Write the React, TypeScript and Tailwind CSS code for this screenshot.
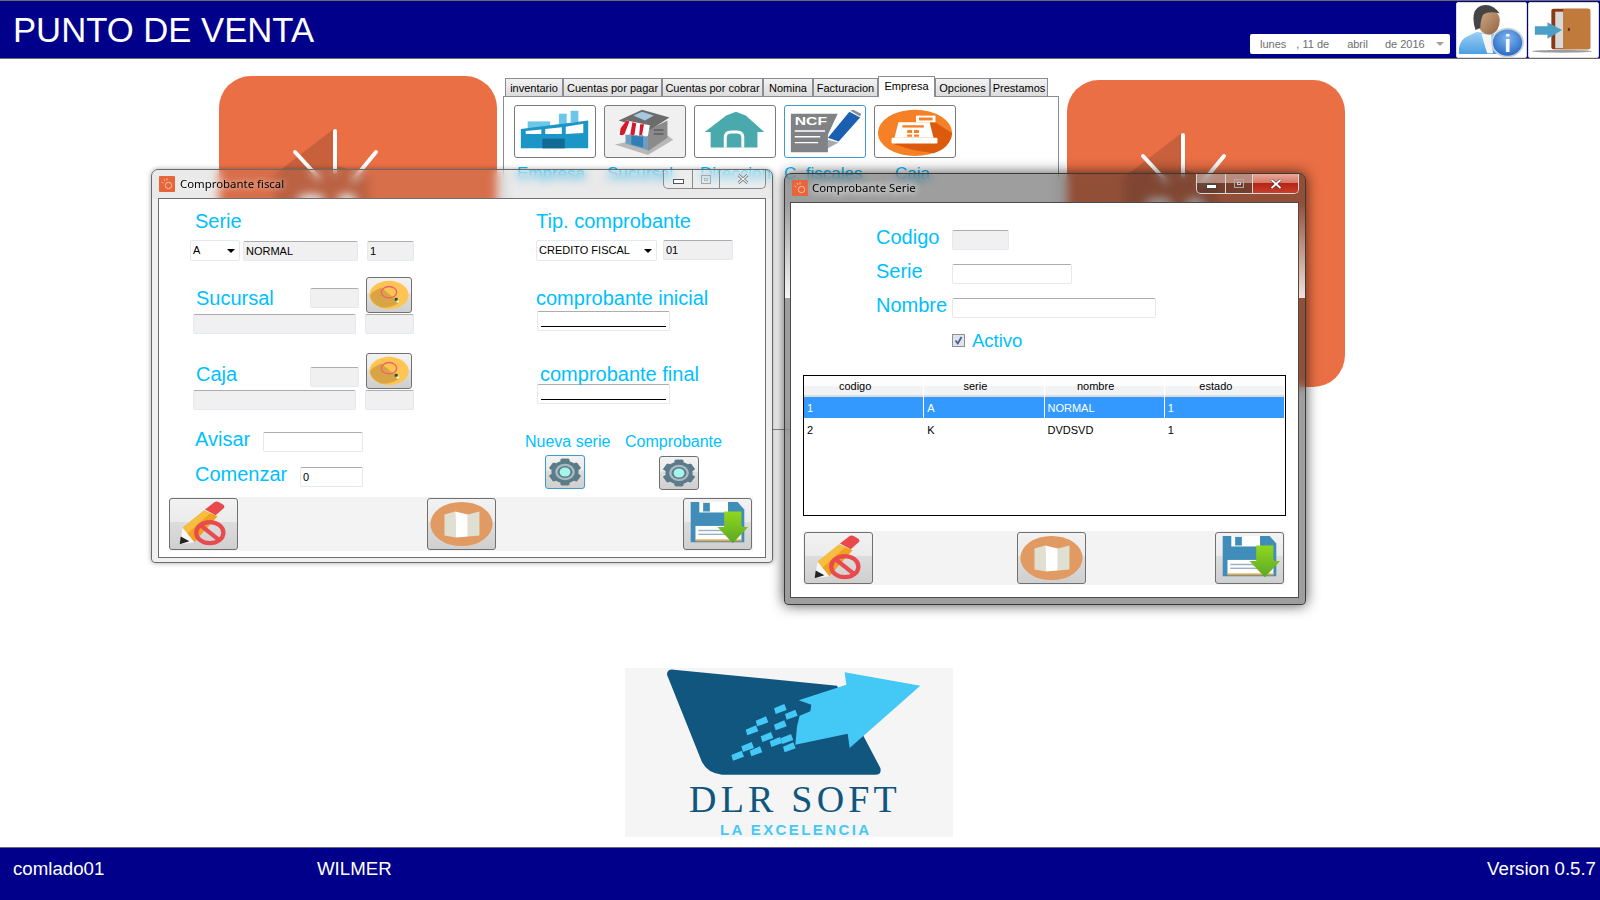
import React from "react";

const inputBase = "border border-[#e3e9ef] border-t-[#abadb3] rounded-[2px] h-[20px] px-[2px] text-[11px] leading-[18px] text-black shrink-0";

function Field({ w, value, ro, className = "" }: { w: string; value?: string; ro?: boolean; className?: string }) {
  return <div className={`${inputBase} ${w} ${ro ? "bg-[#f0f0f0]" : "bg-white"} ${className}`}>{value}</div>;
}

function Combo({ w, value }: { w: string; value: string }) {
  return (
    <div className={`${w} h-[21px] border border-[#e3e9ef] rounded-[2px] bg-white flex items-center justify-between pl-[2px] pr-[4px] text-[11px] text-black shrink-0`}>
      <span>{value}</span>
      <span className="w-0 h-0 border-x-[4px] border-x-transparent border-t-[4px] border-t-black" />
    </div>
  );
}

function Masked() {
  return (
    <div className="w-[133px] h-[20px] bg-white border border-[#e3e9ef] border-t-[#abadb3] rounded-[2px] px-[2px] pt-[14px]">
      <div className="h-px bg-black mx-px" />
    </div>
  );
}

function Label({ children, className = "" }: { children: React.ReactNode; className?: string }) {
  return <div className={`text-[20px] leading-[23px] text-[#00bfff] whitespace-nowrap ${className}`}>{children}</div>;
}

function AeroBtn({ w, h, children, focus }: { w: string; h: string; children: React.ReactNode; focus?: boolean }) {
  return (
    <div className={`${w} ${h} shrink-0 rounded-[3px] border ${focus ? "border-[#3c9ad0]" : "border-[#707070]"} bg-[linear-gradient(#f2f2f2_0%,#ebebeb_45%,#dddddd_46%,#cfcfcf_100%)] overflow-hidden`}>
      {children}
    </div>
  );
}

function Hat() {
  return (
    <svg viewBox="0 0 46 36" preserveAspectRatio="none" className="w-full h-full">
      <ellipse cx="23" cy="18" rx="20.5" ry="15" fill="#ffc452" />
      <path d="M3 19 Q5 14 15 10 L34 26 Q24 33 14 31 Q5 27 3 19Z" fill="#d9a544" />
      <ellipse cx="23" cy="15" rx="8" ry="6" fill="none" stroke="#ee5f74" strokeWidth="1.4" />
      <rect x="29" y="21" width="3" height="3" fill="#0f5a23" />
      <rect x="31" y="24" width="2.5" height="2" fill="#fff" />
    </svg>
  );
}

function Gear() {
  return (
    <svg viewBox="0 0 40 34" preserveAspectRatio="none" className="w-full h-full">
      <g transform="translate(20 17) scale(1.3 1.08) translate(-20 -17)">
        {[0, 60, 120, 180, 240, 300].map((a) => (
          <rect key={a} x="16.5" y="4" width="7" height="26" rx="1" fill="#5b7b89" transform={`rotate(${a} 20 17)`} />
        ))}
        <circle cx="20" cy="17" r="11" fill="#5b7b89" />
        <circle cx="20" cy="17" r="8" fill="#a9b9c0" />
        <circle cx="20" cy="17" r="6" fill="#5b7b89" />
        <circle cx="20" cy="17" r="4.4" fill="#a6f5ea" />
      </g>
    </svg>
  );
}

function PencilNo() {
  return (
    <svg viewBox="0 0 69 52" preserveAspectRatio="none" className="w-full h-full">
      <path d="M13 30 L35 12 L49 18 L25 45Z" fill="#f0a21e" />
      <path d="M13 30 L35 12 L41 15 L18 36Z" fill="#f7bd3f" />
      <path d="M36 11 L46 3 Q48 2 50 3 L55 6 Q57 8 55 10 L47 17Z" fill="#e9494c" />
      <path d="M13 30 L25 45 L10 47Z" fill="#f7f7f7" />
      <path d="M11 39 L20 44 L10 47Z" fill="#222" />
      <ellipse cx="41" cy="35" rx="14" ry="11" fill="none" stroke="#e94a4d" strokeWidth="4.4" />
      <path d="M31 27 L51 43" stroke="#e94a4d" strokeWidth="4.4" />
    </svg>
  );
}

function MapIcon() {
  return (
    <svg viewBox="0 0 69 52" preserveAspectRatio="none" className="w-full h-full">
      <ellipse cx="34.5" cy="26" rx="32" ry="23" fill="#e09a62" />
      <path d="M17 16 L28 13 L29 40 L17 38Z" fill="#dfe0d2" />
      <path d="M28 13 L41 16 L41 39 L29 40Z" fill="#fff" />
      <path d="M41 16 L53 13 L53 38 L41 39Z" fill="#dfe0d2" />
    </svg>
  );
}

function Floppy() {
  return (
    <svg viewBox="0 0 70 52" preserveAspectRatio="none" className="w-full h-full">
      <defs>
        <linearGradient id="arrowGreen" x1="0" y1="0" x2="0" y2="1">
          <stop offset="0" stopColor="#90d81c" />
          <stop offset="1" stopColor="#5ba727" />
        </linearGradient>
      </defs>
      <path d="M7 3 H56 L63 11 V45 H7Z" fill="#3f8db8" />
      <rect x="16" y="3" width="30" height="11" fill="#fff" />
      <rect x="20" y="4" width="7" height="9" fill="#3f8db8" />
      <rect x="12" y="28" width="48" height="15" fill="#fff" />
      <rect x="15" y="32" width="30" height="1.5" fill="#9ab0c4" />
      <rect x="15" y="36" width="32" height="1.5" fill="#9ab0c4" />
      <rect x="12" y="42" width="48" height="2" fill="#e8a84a" />
      <path d="M42 13 H60 V29 H67 L51 46 L35 29 H42Z" fill="url(#arrowGreen)" />
    </svg>
  );
}

function Factory() {
  return (
    <svg viewBox="0 0 82 53" preserveAspectRatio="none" className="w-full h-full">
      <rect x="13" y="16" width="23" height="7" fill="#6cc6e8" />
      <rect x="45" y="8" width="8" height="11" fill="#6cc6e8" />
      <rect x="57" y="5" width="8" height="12" fill="#6cc6e8" />
      <path d="M6 24 L75 15 V44 H6Z" fill="#1b96c7" />
      <path d="M11 26 L27 24.5 V29 H11Z M31 24 L48 22 V29 H31Z M52 21.5 L70 18.5 V28 L52 29Z" fill="#fff" />
      <rect x="28" y="34" width="23" height="10" fill="#116a94" />
    </svg>
  );
}

function Store() {
  return (
    <svg viewBox="0 0 82 53" preserveAspectRatio="none" className="w-full h-full">
      <path d="M10 40 L44 51 L70 35 L62 29 Z" fill="#8a8a8a" opacity="0.55" />
      <path d="M21 26 L44 28 L44 46 L21 39Z" fill="#6f9dbd" />
      <path d="M27 31 L39 32 V43 L27 40Z" fill="#2f7fb5" />
      <path d="M44 25 L64 15 V33 L44 47Z" fill="#8b8b8b" />
      <path d="M14 15 L38 4 L66 12 L46 25Z" fill="#6c6c6c" />
      <path d="M29 10 L38 6 L50 10 L41 15Z" fill="#a5c9de" />
      <path d="M12 29 L22 15 L46 20 L44 31 Q41 33 38 30 Q35 32 32 30 Q29 32 26 29 Q23 31 20 29 Q16 33 12 29Z" fill="#fff" />
      <path d="M16 23 L22 15 L25 16 L20 29 Q18 31 15 30Z M28 17 L32 18 L30 31 Q28 31 26 29Z M36 19 L40 19 L38 30 L35 31Z" fill="#d6182a" />
      <rect x="50" y="24" width="10" height="2" fill="#666" />
      <rect x="50" y="28" width="10" height="2" fill="#666" />
    </svg>
  );
}

function House() {
  return (
    <svg viewBox="0 0 82 53" preserveAspectRatio="none" className="w-full h-full">
      <path d="M10 27 L32 10 L42 6 L52 10 L71 27 H64 V43 H16 V27Z" fill="#4aa9ac" />
      <path d="M31 43 V33 Q31 27 37 27 H43 Q49 27 49 33 V43" fill="none" stroke="#fff" strokeWidth="3" />
    </svg>
  );
}

function Ncf() {
  return (
    <svg viewBox="0 0 82 53" preserveAspectRatio="none" className="w-full h-full">
      <path d="M6 8 H54 L44 30 V48 H6Z" fill="#808285" />
      <text x="10" y="20" fontSize="10.5" fontWeight="700" fill="#fff" textLength="33" lengthAdjust="spacingAndGlyphs">NCF</text>
      <path d="M10 26 H41 M10 32 H36 M10 38 H34" stroke="#fff" strokeWidth="1.4" />
      <path d="M66 6 L77 12 L55 37 L44 33Z" fill="#1a5fb0" />
      <path d="M67 5 L70 4 L78 8 L77 11Z" fill="#8d8f92" />
      <path d="M44 35 L55 38 L44 44Z" fill="#a7a9ac" />
    </svg>
  );
}

function Register() {
  return (
    <svg viewBox="0 0 82 53" preserveAspectRatio="none" className="w-full h-full">
      <ellipse cx="41" cy="28" rx="38" ry="24" fill="#f58025" />
      <path d="M57 14 L79 28 Q77 44 60 49 L40 46 L20 40 Z" fill="#dc5a0c" />
      <rect x="42" y="10" width="20" height="7" fill="#fff" />
      <rect x="45" y="12" width="14" height="3" fill="#f58025" />
      <path d="M24 17 H56 L60 33 H20Z" fill="#fff" />
      <rect x="28" y="20" width="22" height="2.4" fill="#f58025" />
      <path d="M33 25 H38 V28 H33Z M40 25 H45 V28 H40Z M33 29.5 H38 V32 H33Z M40 29.5 H45 V32 H40Z" fill="#f58025" />
      <rect x="17" y="33" width="47" height="6" rx="1" fill="#fff" />
    </svg>
  );
}

function UserInfo() {
  return (
    <svg viewBox="0 0 71 56" preserveAspectRatio="none" className="w-full h-full">
      <defs>
        <linearGradient id="skin" x1="0" y1="0" x2="1" y2="1">
          <stop offset="0" stopColor="#d6b08c" />
          <stop offset="1" stopColor="#8f6242" />
        </linearGradient>
        <radialGradient id="infoBlue" cx="0.5" cy="0.35" r="0.7">
          <stop offset="0" stopColor="#7fb6ee" />
          <stop offset="1" stopColor="#1f62c0" />
        </radialGradient>
        <linearGradient id="shirtBlue" x1="0" y1="0" x2="0" y2="1">
          <stop offset="0" stopColor="#9bd0f4" />
          <stop offset="1" stopColor="#4c9fe4" />
        </linearGradient>
      </defs>
      <path d="M2 53 Q1 38 12 34 L20 30 L38 32 L44 53Z" fill="url(#shirtBlue)" />
      <path d="M25 32 L35 32 L37 52 L31 52Z" fill="#f5f5f5" />
      <path d="M21 22 Q18 8 30 7 Q44 7 44 18 Q44 30 34 33 Q25 33 21 22Z" fill="url(#skin)" />
      <path d="M19 28 Q13 8 24 3 Q36 -1 44 11 Q33 8 27 12 Q24 18 24 26Z" fill="#454545" />
      <ellipse cx="52" cy="41" rx="16" ry="14.5" fill="url(#infoBlue)" stroke="#c9d3dc" strokeWidth="1.8" />
      <text x="52" y="51" fontSize="25" fontWeight="700" fill="#fff" textAnchor="middle">i</text>
    </svg>
  );
}

function Door() {
  return (
    <svg viewBox="0 0 71 56" preserveAspectRatio="none" className="w-full h-full">
      <ellipse cx="34" cy="50" rx="31" ry="1.5" fill="#9c9c9c" />
      <rect x="23" y="6" width="40" height="42" rx="2" fill="#8a3a10" />
      <rect x="27" y="9" width="9" height="38" fill="#d8d8d8" />
      <rect x="35" y="6" width="28" height="42" rx="2" fill="#c07a3c" />
      <rect x="40" y="26" width="2" height="3" fill="#6d2c0c" />
      <path d="M6 24 H19 V20 L34 28 L19 37 V33 H6Z" fill="#4a9fc6" />
    </svg>
  );
}

function WinIcon() {
  return (
    <svg viewBox="0 0 16 16" className="w-[16px] h-[16px] shrink-0 rounded-[1px]">
      <rect width="16" height="16" fill="#e8653a" />
      <circle cx="9.5" cy="9.5" r="3.2" fill="none" stroke="#f3c2aa" strokeWidth="1" />
      <path d="M5 3 L6 5 M8 2 V4.5 M2.5 6 L4.5 7" stroke="#f3c2aa" strokeWidth="0.9" />
    </svg>
  );
}

function OrangeTile() {
  return (
    <div className="w-[278px] h-[307px] rounded-[32px] bg-[#ea6f45] shrink-0 overflow-hidden">
      <svg viewBox="0 0 278 307" className="w-full h-full">
        <path d="M116 52 L56 98 V140 H150 V100 L119 90Z" fill="#c8603c" />
        <path d="M116 55 V96 M76 76 L100 102 M157 76 L134 104" stroke="#fff" strokeWidth="4" strokeLinecap="round" fill="none" />
        <ellipse cx="92" cy="124" rx="14" ry="6" fill="#fff" />
        <ellipse cx="128" cy="124" rx="10" ry="6" fill="#fff" />
      </svg>
    </div>
  );
}

function Strip({ className = "", midMargin }: { className?: string; midMargin: string }) {
  return (
    <div className={`h-[54px] bg-[#f3f3f3] flex items-center pr-px ${className}`}>
      <AeroBtn w="w-[69px]" h="h-[52px]"><PencilNo /></AeroBtn>
      <div className={midMargin}><AeroBtn w="w-[69px]" h="h-[52px]"><MapIcon /></AeroBtn></div>
      <div className="ml-auto"><AeroBtn w="w-[69px]" h="h-[52px]"><Floppy /></AeroBtn></div>
    </div>
  );
}

const tabs = [
  { label: "inventario", w: "w-[58px]" },
  { label: "Cuentas por pagar", w: "w-[99px]" },
  { label: "Cuentas por cobrar", w: "w-[101px]" },
  { label: "Nomina", w: "w-[50px]" },
  { label: "Facturacion", w: "w-[65px]" },
  { label: "Empresa", w: "w-[57px]", active: true },
  { label: "Opciones", w: "w-[55px]" },
  { label: "Prestamos", w: "w-[58px]" },
];

const empresaItems = [
  { label: "Empresa", icon: <Factory />, pad: "pl-[3px]" },
  { label: "Sucursal", icon: <Store />, pad: "pl-[3px]", bg: "bg-[#f0f0f0]" },
  { label: "Direccion", icon: <House />, pad: "pl-[6px]" },
  { label: "C. fiscales", icon: <Ncf />, pad: "pl-0", focus: true },
  { label: "Caja", icon: <Register />, pad: "pl-[21px]" },
];

const logoChecks = [
  [510, 148], [543, 165], [455, 185], [510, 197], [425, 212], [470, 232],
  [530, 238], [412, 262], [497, 247], [382, 288], [437, 275], [537, 263],
];

const gridCols = ["codigo", "serie", "nombre", "estado"];
const gridRows = [
  ["1", "A", "NORMAL", "1"],
  ["2", "K", "DVDSVD", "1"],
];

export default function App() {
  return (
    <div className="relative w-[1600px] h-[900px] overflow-hidden bg-white flex flex-col [font-family:'Liberation_Sans',sans-serif]">
      {/* Top bar */}
      <header className="h-[59px] shrink-0 bg-[#00008b] border-t border-b border-[#6b6b6b] flex items-start">
        <h1 className="ml-[13px] mt-[9px] text-[34.67px] leading-[40px] text-white">PUNTO DE VENTA</h1>
        <div className="ml-auto mt-[33px] w-[200px] h-[20px] bg-white rounded-[2px] flex items-center text-[11px] text-[#6d6d6d] pl-[10px] pr-[6px]">
          <span>lunes</span>
          <span className="ml-[10px]">, 11 de</span>
          <span className="ml-[18px]">abril</span>
          <span className="ml-[17px]">de 2016</span>
          <span className="ml-auto w-0 h-0 border-x-[4px] border-x-transparent border-t-[4px] border-t-[#a0a0a0]" />
        </div>
        <div className="ml-[6px] mt-px w-[71px] h-[56px] bg-white border border-[#d9d9d9] rounded-[2px] overflow-hidden"><UserInfo /></div>
        <div className="ml-px mt-px mr-[1px] w-[71px] h-[56px] bg-white border border-[#d9d9d9] rounded-[2px] overflow-hidden"><Door /></div>
      </header>

      {/* Main area */}
      <main className="flex-1 flex flex-col">
        <div className="flex items-start ml-[219px] pt-[17px]">
          <OrangeTile />
          <div className="ml-[6px] w-[556px] shrink-0">
            <div className="flex items-end h-[20px] pl-[2px]">
              {tabs.map((t) =>
                t.active ? (
                  <div key={t.label} className={`${t.w} h-[21px] -mb-px relative z-10 bg-white border border-[#898c95] border-b-0 text-[11px] text-black text-center leading-[18px]`}>
                    {t.label}
                  </div>
                ) : (
                  <div key={t.label} className={`${t.w} h-[18px] bg-[linear-gradient(#f2f2f2,#dcdcdc)] border border-[#898c95] border-b-0 text-[11px] text-black text-center leading-[19px] whitespace-nowrap`}>
                    {t.label}
                  </div>
                )
              )}
            </div>
            <div className="h-[334px] border border-[#898c95] bg-white pt-[8px] pl-[10px] flex gap-[8px] items-start">
              {empresaItems.map((it) => (
                <div key={it.label} className="w-[82px] shrink-0">
                  <div className={`h-[53px] rounded-[3px] border-[1.5px] overflow-hidden ${it.focus ? "border-[#3c9ad0]" : "border-[#7a7a7a]"} ${it.bg ?? "bg-white"}`}>
                    {it.icon}
                  </div>
                  <div className={`mt-[6px] text-[17px] leading-[20px] text-[#00bfff] whitespace-nowrap ${it.pad}`}>{it.label}</div>
                </div>
              ))}
            </div>
          </div>
          <div className="ml-[8px] mt-[4px]"><OrangeTile /></div>
        </div>

        {/* Logo */}
        <div className="ml-[625px] mt-[238px] w-[328px] h-[169px] bg-[#f5f5f5] flex flex-col">
          <svg viewBox="44 25 984 336" className="w-[328px] h-[112px] shrink-0">
            <path d="M170 45 Q170 28 190 30 L680 78 L810 325 Q815 345 795 345 L335 345 Q285 340 270 295Z" fill="#10567f" />
            <path d="M930 78 L703 38 L708 75 L565 122 L603 135 L600 155 L568 168 L560 200 L558 222 L555 255 L712 222 L718 265Z" fill="#44c8f5" />
            {logoChecks.map(([x, y]) => (
              <polygon key={`${x}-${y}`} points={`${x - 19},${y - 2} ${x + 12},${y - 15} ${x + 19},${y + 3} ${x - 14},${y + 15}`} fill="#44c8f5" />
            ))}
          </svg>
          <div className="ml-[64px] text-[38px] leading-[38px] tracking-[4.2px] text-[#10567f] whitespace-nowrap [font-family:'Liberation_Serif',serif]">DLR SOFT</div>
          <div className="ml-[95px] mt-[3px] text-[15px] leading-[17px] font-bold tracking-[2.4px] text-[#44c8f5] whitespace-nowrap">LA EXCELENCIA</div>
        </div>
      </main>

      {/* Status bar */}
      <footer className="h-[53px] shrink-0 bg-[#00008b] border-t border-[#6b6b6b] flex items-start pt-[10px] text-[18.67px] leading-[22px] text-white">
        <span className="ml-[13px] w-[304px]">comlado01</span>
        <span>WILMER</span>
        <span className="ml-auto mr-[4px]">Version 0.5.7</span>
      </footer>

      {/* Comprobante fiscal (inactive window) */}
      <section className="absolute left-[151px] top-[169px] w-[622px] h-[394px] rounded-t-[7px] rounded-b-[4px] border border-[#6a6a6a] backdrop-blur-[5px] bg-[linear-gradient(rgba(110,110,110,0.15)_0,rgba(110,110,110,0.15)_29px,#f0f0f0_29px,#f0f0f0_100%)] shadow-[0_0_5px_rgba(0,0,0,0.35)] flex flex-col pl-[6px] pr-[6px]">
        <div className="h-[28px] shrink-0 flex items-start">
          <div className="ml-[1px] mt-[6px]"><WinIcon /></div>
          <div className="ml-[5px] mt-[5px] text-[11.4px] leading-[17px] text-black [font-family:'Noto_Sans',sans-serif] [text-shadow:0_0_6px_#fff]">Comprobante fiscal</div>
          <div className="ml-auto w-[103px] h-[19px] rounded-b-[5px] border border-t-0 border-[#8a8a8a] flex bg-white/20">
            <div className="w-[29px] border-r border-[#8a8a8a] flex items-center justify-center"><span className="w-[11px] h-[5px] border border-[#555] bg-white mt-[5px]" /></div>
            <div className="w-[27px] border-r border-[#8a8a8a] flex items-center justify-center"><span className="w-[10px] h-[9px] border border-[#a8a8a8] flex items-center justify-center"><span className="w-[4px] h-[3px] border border-[#bbb]" /></span></div>
            <div className="flex-1 flex items-center justify-center">
              <svg viewBox="0 0 12 10" className="w-[12px] h-[10px]"><path d="M1.5 1 L10.5 9 M10.5 1 L1.5 9" stroke="#666" strokeWidth="2.6" /><path d="M1.5 1 L10.5 9 M10.5 1 L1.5 9" stroke="#f4f4f4" strokeWidth="1.2" /></svg>
            </div>
          </div>
        </div>
        <div className="h-[360px] bg-white border border-[#6f6f6f] flex flex-col">
          <div className="h-[298px] flex">
            {/* Left column */}
            <div className="w-[360px] shrink-0">
              <Label className="ml-[36px] mt-[11px]">Serie</Label>
              <div className="flex items-start ml-[31px] mt-[7px]">
                <Combo w="w-[50px]" value="A" />
                <Field w="w-[115px]" value="NORMAL" ro className="ml-[3px] mt-px" />
                <Field w="w-[47px]" value="1" ro className="ml-[9px] mt-px" />
              </div>
              <div className="flex items-start ml-[37px] mt-[16px]">
                <Label className="w-[114px] mt-[10px]">Sucursal</Label>
                <Field w="w-[49px]" ro className="mt-[11px]" />
                <div className="ml-[7px]"><AeroBtn w="w-[46px]" h="h-[36px]"><Hat /></AeroBtn></div>
              </div>
              <div className="flex ml-[34px] mt-px">
                <Field w="w-[163px]" ro />
                <Field w="w-[49px]" ro className="ml-[9px]" />
              </div>
              <div className="flex items-start ml-[37px] mt-[19px]">
                <Label className="w-[114px] mt-[10px]">Caja</Label>
                <Field w="w-[49px]" ro className="mt-[14px]" />
                <div className="ml-[7px]"><AeroBtn w="w-[46px]" h="h-[36px]"><Hat /></AeroBtn></div>
              </div>
              <div className="flex ml-[34px] mt-px">
                <Field w="w-[163px]" ro />
                <Field w="w-[49px]" ro className="ml-[9px]" />
              </div>
              <div className="flex items-start ml-[36px] mt-[18px]">
                <Label className="w-[68px]">Avisar</Label>
                <Field w="w-[100px]" className="mt-[4px]" />
              </div>
              <div className="flex items-start ml-[36px] mt-[11px]">
                <Label className="w-[105px]">Comenzar</Label>
                <Field w="w-[63px]" value="0" className="mt-[4px]" />
              </div>
            </div>
            {/* Right column */}
            <div className="flex-1">
              <Label className="ml-[17px] mt-[11px]">Tip. comprobante</Label>
              <div className="flex items-start ml-[17px] mt-[7px]">
                <Combo w="w-[121px]" value="CREDITO FISCAL" />
                <Field w="w-[70px]" value="01" ro className="ml-[6px]" />
              </div>
              <Label className="ml-[17px] mt-[26px]">comprobante inicial</Label>
              <div className="ml-[18px] mt-px"><Masked /></div>
              <Label className="ml-[21px] mt-[32px]">comprobante final</Label>
              <div className="ml-[18px] -mt-[2px]"><Masked /></div>
              <div className="flex mt-[29px] ml-[6px] text-[16px] leading-[18px] text-[#00bfff]">
                <span className="w-[100px]">Nueva serie</span>
                <span>Comprobante</span>
              </div>
              <div className="flex items-start ml-[26px] mt-[4px]">
                <AeroBtn w="w-[40px]" h="h-[34px]" focus><Gear /></AeroBtn>
                <div className="ml-[74px] mt-px"><AeroBtn w="w-[40px]" h="h-[34px]"><Gear /></AeroBtn></div>
              </div>
            </div>
          </div>
          <Strip className="ml-[10px] w-[584px]" midMargin="ml-[189px]" />
        </div>
      </section>

      {/* Comprobante Serie (active window) */}
      <section className="absolute left-[784px] top-[173px] w-[522px] h-[432px] rounded-t-[7px] rounded-b-[4px] border border-[#3a3a3a] backdrop-blur-[5px] bg-[linear-gradient(rgba(40,40,40,0.45)_0,rgba(40,40,40,0.45)_29px,rgba(245,245,245,0.85)_124px,rgba(40,40,40,0.45)_124px,rgba(40,40,40,0.45)_100%)] shadow-[0_0_14px_rgba(0,0,0,0.7)] flex flex-col pl-[5px] pr-[6px]">
        <div className="h-[28px] shrink-0 flex items-start">
          <div className="ml-[2px] mt-[6px]"><WinIcon /></div>
          <div className="ml-[4px] mt-[5px] text-[11.4px] leading-[17px] text-black [font-family:'Noto_Sans',sans-serif] [text-shadow:0_0_6px_#fff,0_0_10px_#fff]">Comprobante Serie</div>
          <div className="ml-auto w-[103px] h-[20px] rounded-b-[5px] border border-t-0 border-[#d8d8d8] flex overflow-hidden">
            <div className="w-[29px] border-r border-[#d8d8d8] bg-[linear-gradient(rgba(255,255,255,0.35)_50%,rgba(0,0,0,0.2)_50%)] flex items-center justify-center"><span className="w-[11px] h-[5px] border border-[#444] bg-white mt-[5px]" /></div>
            <div className="w-[27px] border-r border-[#d8d8d8] bg-[linear-gradient(rgba(255,255,255,0.35)_50%,rgba(0,0,0,0.2)_50%)] flex items-center justify-center"><span className="w-[10px] h-[9px] border border-[#aaa] flex items-center justify-center"><span className="w-[4px] h-[3px] border border-[#ccc]" /></span></div>
            <div className="flex-1 bg-[linear-gradient(#e9a89a_0%,#d87a68_45%,#b52414_50%,#c8402a_100%)] flex items-center justify-center">
              <svg viewBox="0 0 12 10" className="w-[12px] h-[10px]"><path d="M1.5 1 L10.5 9 M10.5 1 L1.5 9" stroke="#333" strokeWidth="3" /><path d="M1.5 1 L10.5 9 M10.5 1 L1.5 9" stroke="#fff" strokeWidth="1.8" /></svg>
            </div>
          </div>
        </div>
        <div className="h-[396px] bg-white border border-[#4a4a4a] flex flex-col">
          <div className="flex items-start ml-[85px] mt-[23px]">
            <Label className="w-[76px]">Codigo</Label>
            <Field w="w-[57px]" ro className="mt-[4px]" />
          </div>
          <div className="flex items-start ml-[85px] mt-[10px]">
            <Label className="w-[76px]">Serie</Label>
            <Field w="w-[120px]" className="mt-[4px]" />
          </div>
          <div className="flex items-start ml-[85px] mt-[10px]">
            <Label className="w-[76px]">Nombre</Label>
            <Field w="w-[204px]" className="mt-[4px]" />
          </div>
          <div className="flex items-start ml-[161px] mt-[12px]">
            <div className="mt-[4px] w-[13px] h-[13px] border border-[#8e8f8f] bg-[#dfe3ea] flex items-center justify-center">
              <svg viewBox="0 0 11 11" className="w-[11px] h-[11px]"><path d="M2.5 5.5 L4.8 8.5 L8.5 2" fill="none" stroke="#4a5a96" strokeWidth="1.7" /></svg>
            </div>
            <span className="ml-[7px] text-[18.5px] leading-[21px] text-[#00bfff]">Activo</span>
          </div>

          <div className="ml-[12px] mt-[24px] w-[483px] h-[141px] shrink-0 border border-black bg-white text-[11px]">
            <div className="grid grid-cols-4 h-[21px] border-b-2 border-[#dcdcdc] bg-[linear-gradient(#fdfdfd_50%,#f2f3f5_50%)] text-black">
              {gridCols.map((c) => (
                <div key={c} className="text-center leading-[21px] pr-[17px] border-r border-white">{c}</div>
              ))}
            </div>
            {gridRows.map((row, i) => (
              <div key={row[0]} className={`grid grid-cols-4 h-[21px] ${i === 0 ? "bg-[#3399ff] text-white" : "text-black"}`}>
                {row.map((cell, j) => (
                  <div key={j} className={`pl-[3px] ${i === 0 ? "border-r border-white leading-[22px]" : "leading-[24px]"}`}>{cell}</div>
                ))}
              </div>
            ))}
          </div>

          <Strip className="ml-[12px] pl-px mt-[15px] w-[482px]" midMargin="ml-[144px]" />
        </div>
      </section>
    </div>
  );
}
